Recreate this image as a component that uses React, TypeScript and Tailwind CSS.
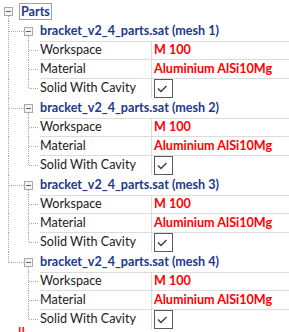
import React from 'react'

const font = { fontFamily: "'Segoe UI', Lato, 'Liberation Sans', sans-serif" }

function Expander({ x, y }: { x: number; y: number }) {
  return (
    <g>
      <rect x={x + 0.5} y={y + 0.5} width={8} height={8} fill="#f4f4f4" stroke="#a9a9a9" />
      <line x1={x + 2} y1={y + 4.5} x2={x + 7} y2={y + 4.5} stroke="#5a6478" />
    </g>
  )
}

function Dots(props: { x1: number; y1: number; x2: number; y2: number }) {
  return <line {...props} stroke="#a8a8a8" strokeDasharray="1 1" />
}

// gutter for the mesh header row
function HeaderGutter({ last }: { last: boolean }) {
  return (
    <svg width={40} height={20} className="shrink-0">
      <Dots x1={8.5} y1={0} x2={8.5} y2={last ? 11 : 20} />
      <Dots x1={9} y1={10.5} x2={24} y2={10.5} />
      <Expander x={24} y={6} />
      <Dots x1={28.5} y1={15} x2={28.5} y2={20} />
    </svg>
  )
}

function PropGutter({ parentLine, end }: { parentLine: boolean; end: boolean }) {
  return (
    <svg width={40} height={19} className="shrink-0">
      {parentLine && <Dots x1={8.5} y1={0} x2={8.5} y2={19} />}
      <Dots x1={28.5} y1={0} x2={28.5} y2={end ? 10 : 19} />
      <Dots x1={29} y1={9.5} x2={39} y2={9.5} />
    </svg>
  )
}

function Check() {
  return (
    <div className="h-[19px] w-[19px] border border-[#5b5b5b] bg-white">
      <svg width={17} height={17}>
        <polyline points="3,8.5 6,11.5 11.5,6" fill="none" stroke="#3c3c3c" strokeWidth={1.4} />
      </svg>
    </div>
  )
}

function PropRow({ name, value, check, first, last, parentLine }: {
  name: string
  value?: string
  check?: boolean
  first?: boolean
  last?: boolean
  parentLine: boolean
}) {
  return (
    <div className="flex h-[19px]">
      <PropGutter parentLine={parentLine} end={!!last} />
      <div
        className={
          'flex flex-1 box-border border-[#dcdcdc] ' +
          (first ? 'border-t ' : '') +
          (last ? '' : 'border-b')
        }
      >
        <div className="flex w-[112px] shrink-0 items-center border-r border-[#dcdcdc] text-[12.6px] text-[#1b1b1b]">
          {name}
        </div>
        <div className="flex items-center pl-[2px] text-[12.6px] font-bold text-[#ff0000]">
          {check ? <Check /> : value}
        </div>
      </div>
    </div>
  )
}

function Mesh({ n, last }: { n: number; last: boolean }) {
  return (
    <div className="flex flex-col">
      <div className="flex h-[20px] items-center">
        <HeaderGutter last={last} />
        <span className="text-[12.6px] font-bold text-[#22388c]">bracket_v2_4_parts.sat (mesh {n})</span>
      </div>
      <PropRow name="Workspace" value="M 100" first parentLine={!last} />
      <PropRow name="Material" value="Aluminium AlSi10Mg" parentLine={!last} />
      <PropRow name="Solid With Cavity" check last parentLine={!last} />
    </div>
  )
}

export default function App() {
  return (
    <div className="h-[332px] w-[289px] overflow-hidden bg-white pt-[2px]" style={font}>
      <div className="flex h-[19px] items-center">
        <svg width={19} height={19} className="shrink-0">
          <Expander x={4} y={5} />
          <Dots x1={8.5} y1={14} x2={8.5} y2={19} />
        </svg>
        <span className="border border-[#a0a0a0] px-[1px] text-[12.6px] leading-[15px] font-bold text-[#22388c]">Parts</span>
      </div>
      {[1, 2, 3, 4].map((n) => (
        <Mesh key={n} n={n} last={n === 4} />
      ))}
      <div className="flex h-[19px] pl-[18px]">
        <span className="-mt-[2px] text-[12.6px] leading-none font-bold text-[#ff0000]">!!</span>
      </div>
    </div>
  )
}
